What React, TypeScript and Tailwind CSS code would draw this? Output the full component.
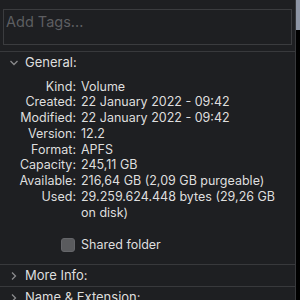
import React from "react";

const rows: [string, string][] = [
  ["Kind:", "Volume"],
  ["Created:", "22 January 2022 - 09:42"],
  ["Modified:", "22 January 2022 - 09:42"],
  ["Version:", "12.2"],
  ["Format:", "APFS"],
  ["Capacity:", "245,11 GB"],
  ["Available:", "216,64 GB (2,09 GB purgeable)"],
  ["Used:", "29.259.624.448 bytes (29,26 GB on disk)"],
];

function Chevron({ down }: { down?: boolean }) {
  return (
    <svg width="10" height="10" viewBox="0 0 10 10" className="shrink-0">
      {down ? (
        <path d="M1.5 3 L5 6.5 L8.5 3" fill="none" stroke="#8a8a8c" strokeWidth="1.3" />
      ) : (
        <path d="M3 1.5 L6.5 5 L3 8.5" fill="none" stroke="#8a8a8c" strokeWidth="1.3" />
      )}
    </svg>
  );
}

export default function App() {
  return (
    <div
      className="w-[300px] h-[300px] overflow-hidden flex bg-[#1e1f22] text-[#dedede] text-[12.5px]"
      style={{ fontFamily: 'Inter, "Liberation Sans", Arial, sans-serif' }}
    >
      <div className="w-[296px] flex flex-col border-r border-[#38393c]">
        <div className="pt-[9px] px-[3px] pb-[6px] border-b border-[#38393c]">
          <div className="h-[36px] border border-[#3b3c3f] pl-[2px] pt-[1px] text-[14.5px] text-[#5d5e61]">
            Add Tags...
          </div>
        </div>
        <div className="flex items-center gap-[6px] pl-[9px] h-[24px] mt-[1px] text-[13px]">
          <Chevron down />
          <span>General:</span>
        </div>
        <div className="mt-[6px] grid grid-cols-[76px_1fr] gap-x-[5px] leading-[15.75px]">
          {rows.map(([k, v]) => (
            <React.Fragment key={k}>
              <div className="text-right whitespace-nowrap">{k}</div>
              <div className="pr-[8px]">{v}</div>
            </React.Fragment>
          ))}
        </div>
        <div className="flex items-center gap-[6px] pl-[61px] mt-[17px] h-[16px]">
          <div className="w-[14px] h-[14px] rounded-[3px] bg-[#5a5b5e] border border-[#65666a]" />
          <span>Shared folder</span>
        </div>
        <div className="mt-[11px] border-t border-[#38393c] h-[22px] flex items-center gap-[6px] pl-[9px] pt-[1px] text-[13px]">
          <Chevron />
          <span>More Info:</span>
        </div>
        <div className="border-t border-[#38393c] h-[22px] flex items-center gap-[6px] pl-[9px] pt-[1px] text-[13px]">
          <Chevron />
          <span>Name &amp; Extension:</span>
        </div>
      </div>
      <div className="flex-1 bg-black flex flex-col">
        <div className="h-[30px] bg-[#8e96a6]" />
      </div>
    </div>
  );
}
